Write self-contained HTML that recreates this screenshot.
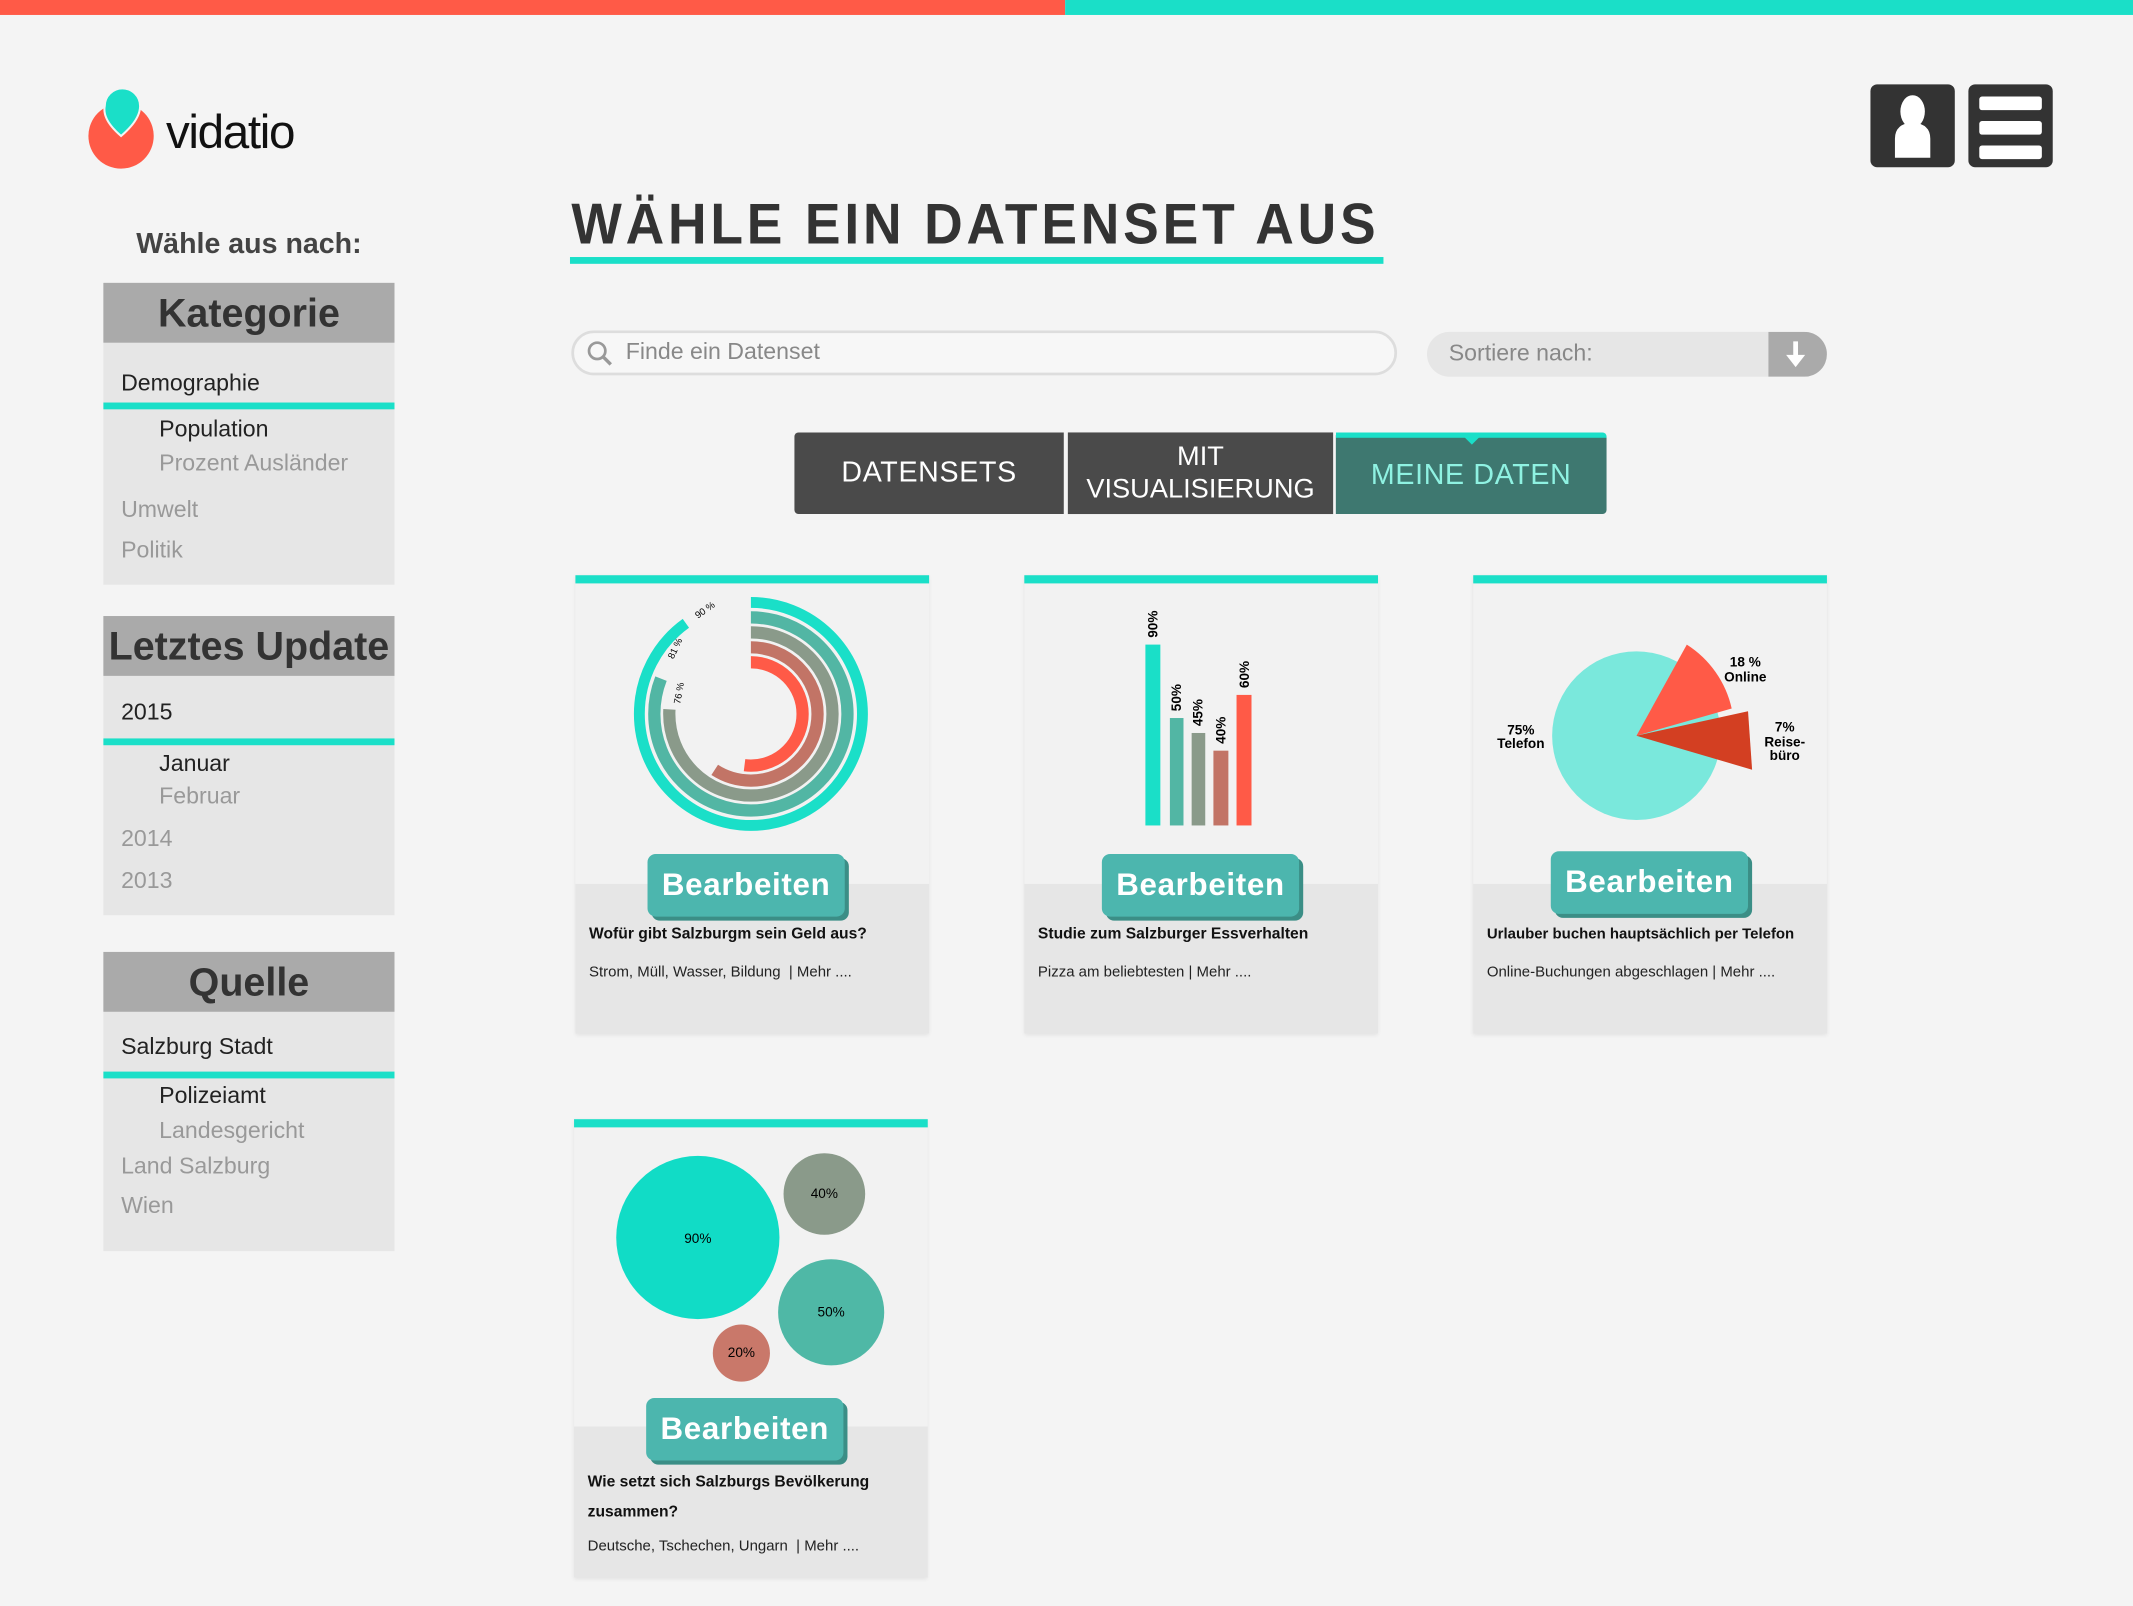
<!DOCTYPE html>
<html><head><meta charset="utf-8"><style>
*{margin:0;padding:0;box-sizing:border-box}
html,body{width:2133px;height:1606px;overflow:hidden;background:#f4f4f4}
#w{position:absolute;left:0;top:0;width:1568px;height:1181px;transform:scale(1.36033,1.3599);transform-origin:0 0;font-family:"Liberation Sans",sans-serif;color:#222}
.a{position:absolute}
.ph{position:absolute;left:76px;width:214px;background:#e6e6e6}
.ph .h{height:44px;background:#aaa;color:#333;font-weight:bold;font-size:29px;text-align:center;line-height:46px}
.it{position:absolute;font-size:17px;white-space:nowrap}
.tl{position:absolute;left:0;width:214px;height:5px;background:#1adfc8}
.card{position:absolute;width:260px;background:#e6e6e6;box-shadow:0 1px 3px rgba(0,0,0,.08)}
.card .top{position:absolute;left:0;top:0;width:100%;height:6px;background:#1adfc8}
.card .up{position:absolute;left:0;top:6px;width:100%;background:#f2f2f2}
.btn{position:absolute;width:145px;height:46px;background:#4cb6ae;border-radius:6px;box-shadow:3px 3px 0 #3b8e86;color:#fff;font-weight:bold;font-size:23px;text-align:center;line-height:44px;letter-spacing:.5px}
.ct{position:absolute;left:10px;font-size:11.5px;font-weight:bold;color:#111;white-space:nowrap}
.cs{position:absolute;left:10px;font-size:11px;color:#222;white-space:nowrap}
.tab{position:absolute;top:318px;height:60px;background:#4a4a4a;color:#fff;font-size:21px;letter-spacing:.5px;text-align:center;display:flex;align-items:center;justify-content:center;line-height:24px}
</style></head><body><div id="w">
<div class="a" style="left:0;top:0;width:783px;height:11px;background:#ff5a47"></div>
<div class="a" style="left:783px;top:0;width:785px;height:11px;background:#1adfc8"></div>

<svg class="a" style="left:60px;top:58px" width="60" height="70"><circle cx="29" cy="42" r="24" fill="#ff5a47"/><path d="M17 20 A13 13 0 1 1 43 20 Q43 30 29 42 Q15 30 17 20Z" fill="#1adfc8" stroke="#f4f4f4" stroke-width="1.5"/></svg>
<div class="a" style="left:122px;top:78px;font-size:35px;color:#111;letter-spacing:-1px">vidatio</div>

<div class="a" style="left:1375px;top:62px;width:62px;height:61px;background:#333;border-radius:5px"></div>
<svg class="a" style="left:1375px;top:62px" width="62" height="61"><ellipse cx="31" cy="20" rx="9" ry="12" fill="#fff"/><path d="M18 54 L18 40 Q18 29 31 28 Q44 29 44 40 L44 54Z" fill="#fff"/></svg>
<div class="a" style="left:1447px;top:62px;width:62px;height:61px;background:#333;border-radius:5px"></div>
<div class="a" style="left:1455px;top:71px;width:46px;height:10px;background:#fff;border-radius:2px"></div>
<div class="a" style="left:1455px;top:89px;width:46px;height:10px;background:#fff;border-radius:2px"></div>
<div class="a" style="left:1455px;top:107px;width:46px;height:10px;background:#fff;border-radius:2px"></div>

<div class="a" style="left:420px;top:141px;font-size:42px;font-weight:bold;color:#333;letter-spacing:3px;white-space:nowrap;transform:scaleX(.935);transform-origin:0 0">WÄHLE EIN DATENSET AUS</div>
<div class="a" style="left:419px;top:189px;width:598px;height:5px;background:#1adfc8"></div>

<div class="a" style="left:76px;top:168px;width:214px;text-align:center;font-size:21px;font-weight:bold;color:#444">Wähle aus nach:</div>

<div class="ph" style="top:208px;height:222px"><div class="h">Kategorie</div>
<div class="it" style="left:13px;top:64px">Demographie</div><div class="tl" style="top:88px"></div>
<div class="it" style="left:41px;top:98px">Population</div>
<div class="it" style="left:41px;top:123px;color:#999">Prozent Ausländer</div>
<div class="it" style="left:13px;top:157px;color:#999">Umwelt</div>
<div class="it" style="left:13px;top:187px;color:#999">Politik</div></div>

<div class="ph" style="top:453px;height:220px"><div class="h">Letztes Update</div>
<div class="it" style="left:13px;top:61px">2015</div><div class="tl" style="top:90px"></div>
<div class="it" style="left:41px;top:99px">Januar</div>
<div class="it" style="left:41px;top:123px;color:#999">Februar</div>
<div class="it" style="left:13px;top:154px;color:#999">2014</div>
<div class="it" style="left:13px;top:185px;color:#999">2013</div></div>

<div class="ph" style="top:700px;height:220px"><div class="h">Quelle</div>
<div class="it" style="left:13px;top:60px">Salzburg Stadt</div><div class="tl" style="top:88px"></div>
<div class="it" style="left:41px;top:96px">Polizeiamt</div>
<div class="it" style="left:41px;top:122px;color:#999">Landesgericht</div>
<div class="it" style="left:13px;top:148px;color:#999">Land Salzburg</div>
<div class="it" style="left:13px;top:177px;color:#999">Wien</div></div>

<div class="a" style="left:420px;top:243px;width:607px;height:33px;border:2px solid #ddd;border-radius:17px;background:#f7f7f7"></div>
<svg class="a" style="left:430px;top:249px" width="22" height="22"><circle cx="9" cy="9" r="6" fill="none" stroke="#999" stroke-width="2"/><line x1="13" y1="13" x2="19" y2="19" stroke="#999" stroke-width="2.5"/></svg>
<div class="a" style="left:460px;top:249px;font-size:17px;color:#888">Finde ein Datenset</div>

<div class="a" style="left:1049px;top:244px;width:294px;height:33px;border-radius:17px;background:#e6e6e6;overflow:hidden"><div class="a" style="left:251px;top:0;width:43px;height:33px;background:#aaa"></div></div>
<svg class="a" style="left:1300px;top:244px" width="43" height="33"><line x1="20" y1="7" x2="20" y2="22" stroke="#fff" stroke-width="3.5"/><path d="M13 17 L20 26 L27 17Z" fill="#fff"/></svg>
<div class="a" style="left:1065px;top:250px;font-size:17px;color:#888">Sortiere nach:</div>

<div class="tab" style="left:584px;width:198px;border-radius:3px 0 0 3px">DATENSETS</div>
<div class="tab" style="left:785px;width:195px;font-size:20px;letter-spacing:0">MIT<br>VISUALISIERUNG</div>
<div class="tab" style="left:982px;width:199px;background:#3e7870;color:#8ff2e2;border-top:4px solid #1adfc8;border-radius:0 3px 3px 0">MEINE DATEN</div>
<svg class="a" style="left:1076px;top:321px" width="12" height="6"><path d="M0 0 L12 0 L6 6Z" fill="#1adfc8"/></svg>

<!-- card1 -->
<div class="card" style="left:423px;top:423px;height:337px"><div class="up" style="height:221px"></div><div class="top"></div>
<svg class="a" style="left:0;top:0" width="260" height="220">
<g transform="rotate(-90 129 102)" fill="none">
<circle cx="129" cy="102" r="82" stroke="#1adfc8" stroke-width="8" stroke-dasharray="464 600"/>
<circle cx="129" cy="102" r="71" stroke="#52b6a4" stroke-width="9" stroke-dasharray="361 600"/>
<circle cx="129" cy="102" r="60" stroke="#8a9a8a" stroke-width="9" stroke-dasharray="286 600"/>
<circle cx="129" cy="102" r="49" stroke="#c27466" stroke-width="9" stroke-dasharray="182 600"/>
<circle cx="129" cy="102" r="38" stroke="#ff5a47" stroke-width="9" stroke-dasharray="124 600"/>
</g>
<text x="90" y="32" font-size="7" transform="rotate(-35 90 32)" font-family="Liberation Sans">90 %</text>
<text x="72" y="62" font-size="7" transform="rotate(-65 72 62)" font-family="Liberation Sans">81 %</text>
<text x="77" y="95" font-size="7" transform="rotate(-80 77 95)" font-family="Liberation Sans">76 %</text>
</svg>
<div class="btn" style="left:53px;top:205px">Bearbeiten</div>
<div class="ct" style="top:258px">Wofür gibt Salzburgm sein Geld aus?</div>
<div class="cs" style="top:286px">Strom, Müll, Wasser, Bildung &nbsp;|&nbsp;Mehr ....</div></div>

<!-- card2 -->
<div class="card" style="left:753px;top:423px;height:337px"><div class="up" style="height:221px"></div><div class="top"></div>
<svg class="a" style="left:0;top:0" width="260" height="220" font-family="Liberation Sans" font-size="10" font-weight="bold">
<rect x="89" y="51" width="11" height="133" fill="#1adfc8"/>
<rect x="107" y="105" width="10" height="79" fill="#52b6a4"/>
<rect x="123" y="116" width="10" height="68" fill="#8a9a8a"/>
<rect x="139" y="129" width="11" height="55" fill="#c27466"/>
<rect x="156" y="88" width="11" height="96" fill="#ff5a47"/>
<text transform="translate(98 46) rotate(-90)">90%</text>
<text transform="translate(115 100) rotate(-90)">50%</text>
<text transform="translate(131 111) rotate(-90)">45%</text>
<text transform="translate(148 124) rotate(-90)">40%</text>
<text transform="translate(165 83) rotate(-90)">60%</text>
</svg>
<div class="btn" style="left:57px;top:205px">Bearbeiten</div>
<div class="ct" style="top:258px">Studie zum Salzburger Essverhalten</div>
<div class="cs" style="top:286px">Pizza am beliebtesten | Mehr ....</div></div>

<!-- card3 -->
<div class="card" style="left:1083px;top:423px;height:337px"><div class="up" style="height:221px"></div><div class="top"></div>
<svg class="a" style="left:0;top:0" width="260" height="220" font-family="Liberation Sans" font-size="10" font-weight="bold" text-anchor="middle">
<circle cx="120" cy="118" r="62" fill="#7ae8dc"/>
<path d="M120 118 L157 51 A75 75 0 0 1 190 98Z" fill="#ff5a47"/>
<path d="M120 118 L202 100 L205 143Z" fill="#d33f22"/>
<text x="200" y="67">18 %</text><text x="200" y="78">Online</text>
<text x="35" y="117">75%</text><text x="35" y="127">Telefon</text>
<text x="229" y="115">7%</text><text x="229" y="126">Reise-</text><text x="229" y="136">büro</text>
</svg>
<div class="btn" style="left:57px;top:203px">Bearbeiten</div>
<div class="ct" style="top:258px;font-size:11px">Urlauber buchen hauptsächlich per Telefon</div>
<div class="cs" style="top:286px">Online-Buchungen abgeschlagen | Mehr ....</div></div>

<!-- card4 -->
<div class="card" style="left:422px;top:823px;height:337px"><div class="up" style="height:220px"></div><div class="top"></div>
<svg class="a" style="left:0;top:0" width="260" height="220" font-family="Liberation Sans" font-size="10" text-anchor="middle">
<circle cx="91" cy="87" r="60" fill="#11dcc6"/>
<circle cx="184" cy="55" r="30" fill="#8a9a8a"/>
<circle cx="189" cy="142" r="39" fill="#4fb8a6"/>
<circle cx="123" cy="172" r="21" fill="#c9786a"/>
<text x="91" y="91">90%</text><text x="184" y="58">40%</text><text x="189" y="145">50%</text><text x="123" y="175">20%</text>
</svg>
<div class="btn" style="left:53px;top:205px">Bearbeiten</div>
<div class="ct" style="top:256px;line-height:22px">Wie setzt sich Salzburgs Bevölkerung<br>zusammen?</div>
<div class="cs" style="top:308px">Deutsche, Tschechen, Ungarn &nbsp;|&nbsp;Mehr ....</div></div>
</div></body></html>
